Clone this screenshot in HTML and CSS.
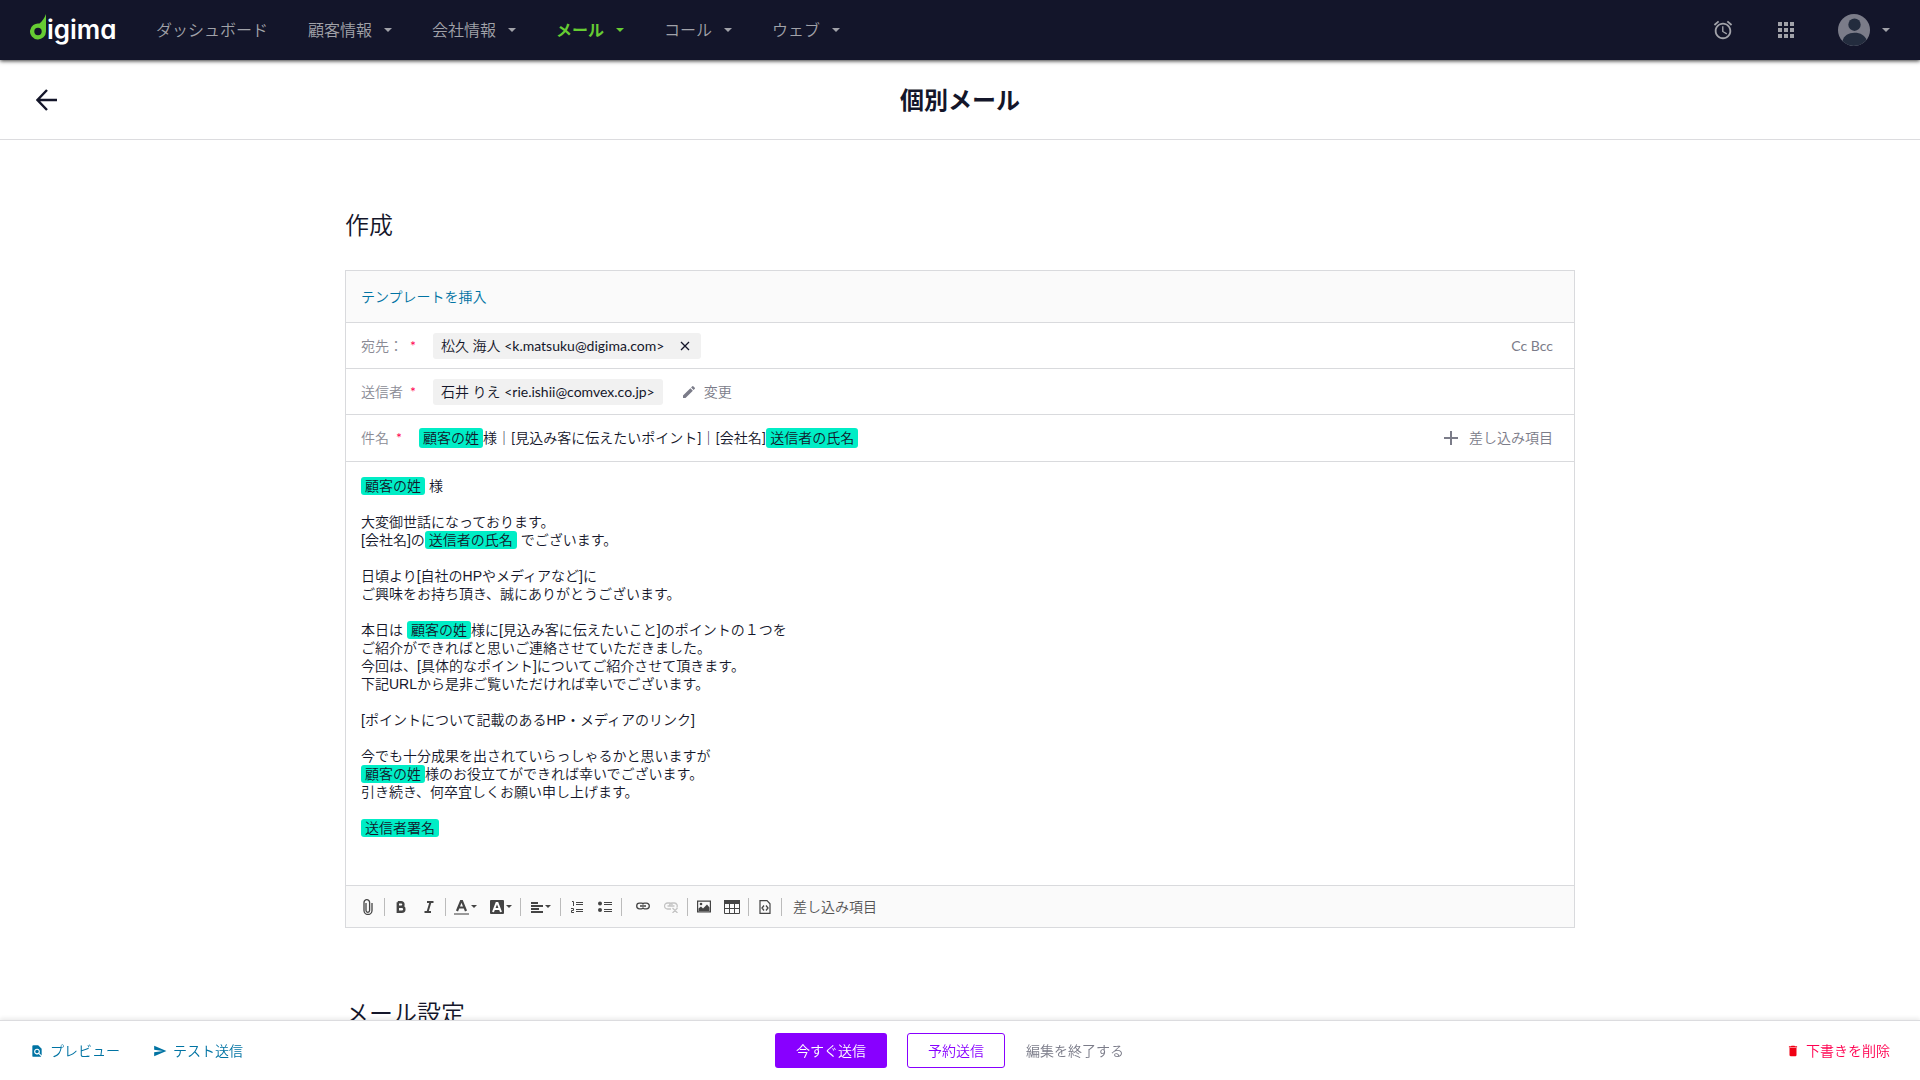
FILE: index.html
```html
<!DOCTYPE html>
<html lang="ja">
<head>
<meta charset="utf-8">
<meta name="viewport" content="width=device-width, initial-scale=1">
<title>個別メール | digima</title>
<link rel="stylesheet" href="styles.css">
</head>
<body>
<header class="topbar">
  <a class="logo" href="#" aria-label="digima">
    <svg class="logo-mark" width="17" height="26" viewBox="0 0 17 26" aria-hidden="true"><path fill="#6c3" fill-rule="evenodd" d="M16 0v17.500a8 8 0 1 1-6.500-7.900C12 7.500 14.500 4 16 0ZM8 13.800a3.700 3.700 0 1 0 0 7.400a3.700 3.700 0 0 0 0-7.400Z"/></svg>
    <span class="logo-text">igima</span>
  </a>
  <nav class="nav">
    <a class="nav-item" href="#">ダッシュボード</a>
    <a class="nav-item" href="#">顧客情報<span class="caret"></span></a>
    <a class="nav-item" href="#">会社情報<span class="caret"></span></a>
    <a class="nav-item nav-active" href="#">メール<span class="caret"></span></a>
    <a class="nav-item" href="#">コール<span class="caret"></span></a>
    <a class="nav-item" href="#">ウェブ<span class="caret"></span></a>
  </nav>
  <div class="tools">
    <button class="plain" type="button" aria-label="リマインダー"><svg width="22" height="22" viewBox="0 0 24 24"><path fill="currentColor" d="M22 5.720l-4.600-3.860-1.290 1.530 4.600 3.860L22 5.720zM7.880 3.390L6.600 1.860 2 5.710l1.290 1.530 4.590-3.850zM12.500 8H11v6l4.750 2.850.75-1.230-4-2.370V8zM12 4c-4.970 0-9 4.030-9 9s4.020 9 9 9c4.970 0 9-4.030 9-9s-4.030-9-9-9zm0 16c-3.870 0-7-3.130-7-7s3.130-7 7-7 7 3.130 7 7-3.130 7-7 7z"/></svg></button>
    <button class="plain" type="button" aria-label="アプリ"><svg width="24" height="24" viewBox="0 0 24 24"><path fill="currentColor" d="M4 8h4V4H4v4zm6 12h4v-4h-4v4zm-6 0h4v-4H4v4zm0-6h4v-4H4v4zm6 0h4v-4h-4v4zm6-10v4h4V4h-4zm-6 4h4V4h-4v4zm6 6h4v-4h-4v4zm0 6h4v-4h-4v4z"/></svg></button>
    <button class="plain account" type="button" aria-label="アカウント">
      <svg width="32" height="32" viewBox="0 0 32 32"><circle cx="16" cy="16" r="16" fill="#7b7c89"/><circle cx="16.500" cy="10.700" r="6.200" fill="#232c3e"/><path fill="#232c3e" d="M4.500 27C6 21.500 10.500 18.800 16.500 18.800S27 21.500 28.400 26A16 16 0 0 1 4.500 27Z"/></svg>
      <span class="caret"></span>
    </button>
  </div>
</header>

<div class="titlebar">
  <a class="back" href="#" aria-label="戻る"><svg width="22" height="22" viewBox="0 0 22 22"><path d="M21 11H2M11 1L1.500 11L11 21" fill="none" stroke="currentColor" stroke-width="2.400"/></svg></a>
  <h1 class="title">個別メール</h1>
</div>

<main class="content">
  <h2 class="section-title">作成</h2>
  <section class="composer">
    <div class="template-row"><a class="link" href="#">テンプレートを挿入</a></div>
    <div class="row">
      <span class="label">宛先：<span class="req">*</span></span>
      <span class="chip">松久 海人 &lt;k.matsuku@digima.com&gt;
        <button class="plain chip-close" type="button" aria-label="削除"><svg width="10" height="10" viewBox="0 0 10 10"><path d="M1 1l8 8M9 1L1 9" stroke="currentColor" stroke-width="1.300"/></svg></button>
      </span>
      <button class="plain muted row-end" type="button">Cc Bcc</button>
    </div>
    <div class="row">
      <span class="label">送信者<span class="req">*</span></span>
      <span class="chip">石井 りえ &lt;rie.ishii@comvex.co.jp&gt;</span>
      <button class="plain muted edit" type="button"><svg width="16" height="16" viewBox="0 0 24 24"><path fill="currentColor" d="M3 17.250V21h3.750L17.810 9.940l-3.750-3.750L3 17.250zM20.710 7.040a1 1 0 0 0 0-1.410l-2.340-2.340a1 1 0 0 0-1.410 0l-1.830 1.830 3.750 3.750 1.830-1.830z"/></svg>変更</button>
    </div>
    <div class="row row-subject">
      <span class="label" id="subject-label">件名<span class="req">*</span></span>
      <div class="subject" contenteditable="true" role="textbox" aria-labelledby="subject-label" spellcheck="false"><span class="tag">顧客の姓</span>様｜[見込み客に伝えたいポイント]｜[会社名]<span class="tag">送信者の氏名</span></div>
      <button class="plain muted insert" type="button"><svg width="14" height="14" viewBox="0 0 14 14"><path d="M7 0v14M0 7h14" stroke="currentColor" stroke-width="2"/></svg>差し込み項目</button>
    </div>
    <div class="editor" contenteditable="true" role="textbox" aria-multiline="true" aria-label="本文" spellcheck="false">
      <p><span class="tag">顧客の姓</span> 様</p>
      <p>大変御世話になっております。<br>[会社名]の<span class="tag">送信者の氏名</span> でございます。</p>
      <p>日頃より[自社のHPやメディアなど]に<br>ご興味をお持ち頂き、誠にありがとうございます。</p>
      <p>本日は <span class="tag">顧客の姓</span>様に[見込み客に伝えたいこと]のポイントの１つを<br>ご紹介ができればと思いご連絡させていただきました。<br>今回は、[具体的なポイント]についてご紹介させて頂きます。<br>下記URLから是非ご覧いただければ幸いでございます。</p>
      <p>[ポイントについて記載のあるHP・メディアのリンク]</p>
      <p>今でも十分成果を出されていらっしゃるかと思いますが<br><span class="tag">顧客の姓</span>様のお役立てができれば幸いでございます。<br>引き続き、何卒宜しくお願い申し上げます。</p>
      <p><span class="tag">送信者署名</span></p>
    </div>
    <div class="toolbar" role="toolbar" aria-label="書式">
      <div class="group">
        <button class="plain tool" type="button" aria-label="添付"><svg width="10" height="16" viewBox="0 0 10 16"><path d="M3 4v7.500a1.800 1.800 0 0 0 3.600 0V3.500a2.600 2.600 0 0 0-5.600 0V11.500a4 4 0 0 0 8 0V4" fill="none" stroke="currentColor" stroke-width="1.300"/></svg></button>
      </div>
      <div class="group">
        <button class="plain tool" type="button" aria-label="太字"><svg width="10" height="12" viewBox="0 0 10 12"><path fill="none" stroke="currentColor" stroke-width="2.400" d="M1.800 1.200h3.400a2.200 2.200 0 0 1 0 4.500H1.800h4a2.500 2.500 0 0 1 0 5.100h-4V1.200"/></svg></button>
        <button class="plain tool" type="button" aria-label="斜体"><svg width="10" height="12" viewBox="0 0 10 12"><path fill="none" stroke="currentColor" stroke-width="2" d="M3 1h6.500M.5 11H7M6.500 1L3.500 11"/></svg></button>
      </div>
      <div class="group">
        <button class="plain tool tool-menu" type="button" aria-label="文字色"><svg width="15" height="16" viewBox="0 0 15 16"><path fill="none" stroke="currentColor" stroke-width="2.200" d="M3 12L7 2h1l4 10M4.500 8.500h6"/><path fill="#999" d="M0 14h15v2H0z"/></svg><span class="caret caret-sm"></span></button>
        <button class="plain tool tool-menu" type="button" aria-label="背景色"><svg width="14" height="14" viewBox="0 0 14 14"><rect width="14" height="14" rx="1" fill="currentColor"/><path fill="none" stroke="#fff" stroke-width="2" d="M3 12L6.500 3h1L11 12M4.500 9h5"/></svg><span class="caret caret-sm"></span></button>
      </div>
      <div class="group">
        <button class="plain tool tool-menu" type="button" aria-label="配置"><svg width="12" height="12" viewBox="0 0 12 12"><path fill="currentColor" d="M0 1h7v2H0zM0 4h12v2H0zM0 7h8v2H0zM0 10h12v2H0z"/></svg><span class="caret caret-sm"></span></button>
      </div>
      <div class="group">
        <button class="plain tool" type="button" aria-label="番号付きリスト"><svg width="12" height="13" viewBox="0 0 12 13"><path fill="none" stroke="currentColor" d="M5 2.500h7M5 4.500h7M5 9.500h7M5 11.500h7M1 1.500h1.500V6M0 8.500h2.500v2H.5v2H3"/></svg></button>
        <button class="plain tool" type="button" aria-label="リスト"><svg width="14" height="13" viewBox="0 0 14 13"><circle cx="2" cy="3.500" r="2" fill="currentColor"/><circle cx="2" cy="10" r="2" fill="currentColor"/><path fill="none" stroke="currentColor" d="M6 2.500h8M6 4.500h8M6 9.500h8M6 11.500h8"/></svg></button>
      </div>
      <div class="group group-links">
        <button class="plain tool" type="button" aria-label="リンク"><svg width="14" height="12" viewBox="0 0 14 12"><g fill="none" stroke="currentColor" stroke-width="1.300"><path d="M7.500 3.300A2.500 2.500 0 0 0 5.500 2.200H3.500a2.800 2.800 0 0 0 0 5.600h2a2.500 2.500 0 0 0 2-1.100M6.500 3.300a2.500 2.500 0 0 1 2-1.100h2a2.800 2.800 0 0 1 0 5.600h-2a2.500 2.500 0 0 1-2-1.100M4 5h6"/></g></svg></button>
        <button class="plain tool" type="button" aria-label="リンク解除" disabled><svg width="14" height="12" viewBox="0 0 14 12"><g fill="none" stroke="currentColor" stroke-width="1.300"><path d="M7 8H3.500a3 3 0 0 1 0-6H6a2.500 2.500 0 0 1 2.300 2M5.700 4.500A2.500 2.500 0 0 1 8 2h2.500a3 3 0 0 1 2.300 4.500M3.500 5h7M8.500 7l5 5M13.500 7l-5 5"/></g></svg></button>
      </div>
      <div class="group">
        <button class="plain tool" type="button" aria-label="画像"><svg width="14" height="13" viewBox="0 0 14 13"><path fill="none" stroke="currentColor" stroke-width="1.200" d="M.6 1.100h12.800v10.800H.6z"/><circle cx="4" cy="4" r="1.300" fill="currentColor"/><path fill="currentColor" d="M1.500 11V8.500L4 6.500l2 2 4-4 2.500 3V11z"/></svg></button>
        <button class="plain tool" type="button" aria-label="表"><svg width="16" height="14" viewBox="0 0 16 14"><path fill="currentColor" d="M0 0h16v4H0z"/><path fill="none" stroke="currentColor" d="M.5 3v10.500h15V3M5.500 4v10M10.500 4v10M0 8.500h16"/></svg></button>
      </div>
      <div class="group">
        <button class="plain tool" type="button" aria-label="ソース"><svg width="12" height="14" viewBox="0 0 12 14"><path fill="none" stroke="currentColor" stroke-width="1.200" d="M1 .6h7L11 3.800v9.600H1z"/><path fill="none" stroke="currentColor" stroke-width="1.300" d="M5 5.500L3 8l2 2.500M7 5.500L9 8l-2 2.500"/></svg></button>
      </div>
      <button class="plain merge" type="button">差し込み項目</button>
    </div>
  </section>
  <h2 class="section-title">メール設定</h2>
</main>

<footer class="actions">
  <div class="actions-left">
    <a class="link" href="#"><svg width="14" height="14" viewBox="0 0 24 24"><path fill="currentColor" d="M20 19.590V8l-6-6H6a2 2 0 0 0-2 2v16a2 2 0 0 0 2 2h12c.45 0 .85-.15 1.190-.4l-4.430-4.430A4.980 4.980 0 1 1 16.170 15.750L20 19.590zM9 13c0 1.660 1.340 3 3 3s3-1.340 3-3-1.340-3-3-3-3 1.340-3 3z"/></svg>プレビュー</a>
    <a class="link" href="#"><svg width="14" height="14" viewBox="0 0 24 24"><path fill="currentColor" d="M2 21l21-9L2 3v7l15 2-15 2v7z"/></svg>テスト送信</a>
  </div>
  <div class="actions-center">
    <button class="btn btn-primary" type="button">今すぐ送信</button>
    <button class="btn btn-outline" type="button">予約送信</button>
    <button class="btn btn-text" type="button">編集を終了する</button>
  </div>
  <div class="actions-right">
    <a class="link danger" href="#"><svg width="14" height="14" viewBox="0 0 24 24"><path fill="#f00014" d="M6 19c0 1.100.9 2 2 2h8a2 2 0 0 0 2-2V7H6v12zM19 4h-3.500l-1-1h-5l-1 1H5v2h14V4z"/></svg>下書きを削除</a>
  </div>
</footer>
</body>
</html>
```
FILE: styles.css
```css
* {
  box-sizing: border-box;
}

body {
  margin: 0;
  background: #fff;
  color: #14162a;
  font-family: Lato, "Noto Sans CJK JP DemiLight", "Noto Sans CJK JP", sans-serif;
  font-size: 14px;
  font-weight: 400;
  line-height: 20px;
}

a {
  color: inherit;
  text-decoration: none;
}

svg {
  display: block;
  flex: none;
}

.plain {
  display: flex;
  align-items: center;
  margin: 0;
  padding: 0;
  border: 0;
  background: none;
  color: inherit;
  font: inherit;
  cursor: pointer;
}

.caret {
  border: 4px solid transparent;
  border-top-color: currentColor;
  border-bottom-width: 0;
}

.caret-sm {
  border-width: 3px 3px 0;
}

/* Top bar */
.topbar {
  position: sticky;
  top: 0;
  z-index: 2;
  display: flex;
  align-items: center;
  height: 60px;
  padding: 0 30px;
  background: #13152a;
  color: #a1a2a9;
  box-shadow: 0 1px 4px rgba(0, 0, 0, 0.8);
}

.logo {
  display: flex;
  align-items: center;
  width: 126px;
  color: #fff;
}

.logo-mark {
  margin-bottom: 6px;
}

.logo-text {
  font-family: Inter, sans-serif;
  font-size: 26px;
  font-weight: 600;
  line-height: 30px;
  font-feature-settings: "cv11";
}

.nav {
  display: flex;
  gap: 40px;
  font-size: 16px;
}

.nav-item {
  display: flex;
  align-items: center;
  gap: 12px;
}

.nav-active {
  color: #6c3;
  font-family: Lato, "Noto Sans CJK JP", sans-serif;
  font-weight: 700;
}

.tools {
  display: flex;
  align-items: center;
  gap: 40px;
  margin-left: auto;
}

.account {
  gap: 12px;
}

/* Title bar */
.titlebar {
  display: grid;
  grid-template-columns: 1fr auto 1fr;
  align-items: center;
  height: 80px;
  padding: 0 36px;
  border-bottom: 1px solid #dcdcdf;
}

.title {
  margin: 0;
  font-family: Lato, "Noto Sans CJK JP", sans-serif;
  font-size: 24px;
  font-weight: 700;
  line-height: 26px;
}

/* Composer */
.content {
  max-width: 1270px;
  margin: 0 auto;
  padding: 0 20px 48px;
}

.section-title {
  margin: 72px 0 32px;
  font-size: 24px;
  font-weight: 400;
  line-height: 26px;
}

.section-title:last-child {
  margin-bottom: 0;
}

.composer {
  border: 1px solid #d9dadd;
}

.template-row,
.row {
  display: flex;
  align-items: center;
  min-height: 46px;
  padding: 0 21px 0 15px;
  border-bottom: 1px solid #d9dadd;
}

.template-row {
  min-height: 52px;
  background: #fafafa;
}

.row-subject {
  min-height: 47px;
}

.label {
  display: flex;
  gap: 7px;
  color: #8a8b95;
}

.req {
  width: 23px;
  color: #ff0050;
}

.chip {
  display: flex;
  align-items: center;
  gap: 16px;
  height: 26px;
  padding: 0 8px;
  border-radius: 3px;
  background: #f1f1f1;
}

.chip-close {
  padding-right: 3px;
}

.muted {
  color: #7b7c89;
}

.row-end {
  margin-left: auto;
}

.edit {
  gap: 7px;
  margin-left: 18px;
}

.insert {
  gap: 11px;
}

.subject {
  flex: 1;
  outline: none;
}

.tag {
  display: inline-block;
  padding: 0 4px;
  border-radius: 3px;
  background: #00edc6;
}

.editor {
  min-height: 423px;
  padding: 15px;
  outline: none;
  font-family: "Liberation Sans", "Noto Sans CJK JP DemiLight", "Noto Sans CJK JP", sans-serif;
  line-height: 18px;
}

.editor p {
  margin: 0 0 18px;
}

.editor .tag {
  vertical-align: top;
}

/* Formatting toolbar */
.toolbar {
  display: flex;
  align-items: center;
  height: 42px;
  padding-left: 6px;
  border-top: 1px solid #d9dadd;
  background: #fafafa;
  color: #444;
}

.group {
  display: flex;
  align-items: center;
  height: 18px;
  padding: 0 2px;
  border-right: 1px solid #bbb;
}

.group-links {
  padding-left: 7px;
}

.tool {
  justify-content: center;
  width: 28px;
  height: 18px;
}

.tool:disabled {
  color: #c4c4c4;
}

.tool-menu {
  gap: 2px;
  width: 35px;
}

.merge {
  margin-left: 11px;
  color: #555;
}

/* Bottom action bar */
.actions {
  position: fixed;
  right: 0;
  bottom: 0;
  left: 0;
  z-index: 2;
  display: grid;
  grid-template-columns: 1fr auto 1fr;
  align-items: center;
  height: 60px;
  padding: 0 30px;
  border-top: 1px solid #dcdcdf;
  background: #fff;
  box-shadow: 0 -2px 4px rgba(0, 0, 0, 0.08);
}

.actions-left,
.actions-center,
.actions-right {
  display: flex;
  align-items: center;
}

.actions-left {
  gap: 33px;
}

.actions-center {
  gap: 20px;
}

.actions-right {
  justify-content: flex-end;
}

.link {
  display: flex;
  align-items: center;
  gap: 6px;
  color: #0073a3;
}

.danger {
  color: #ff0050;
}

.btn {
  height: 35px;
  padding: 0 20px;
  border: 1px solid transparent;
  border-radius: 3px;
  background: none;
  font: inherit;
  cursor: pointer;
}

.btn-primary {
  background: #80f;
  color: #fff;
}

.btn-outline {
  border-color: #80f;
  color: #80f;
}

.btn-text {
  padding-left: 0;
  color: #7b7c89;
}
```
